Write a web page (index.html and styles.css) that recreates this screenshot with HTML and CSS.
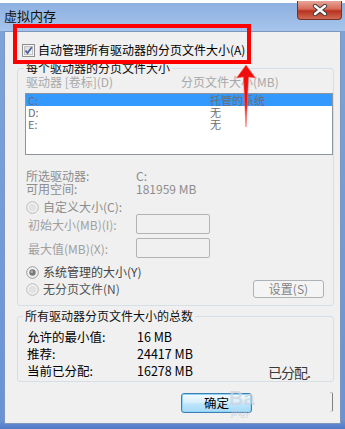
FILE: index.html
```html
<!DOCTYPE html>
<html lang="zh-CN">
<head>
<meta charset="utf-8">
<link rel="stylesheet" href="styles.css">
</head>
<body>
<div class="window">
  <div class="titlebar">
    <span class="title">虚拟内存</span>
    <div class="close">
      <svg width="16" height="12" viewBox="0 0 16 12">
        <path d="M3 2 L13 10 M13 2 L3 10" stroke="#3a3a3a" stroke-width="4.2" stroke-linecap="round"/>
        <path d="M3 2 L13 10 M13 2 L3 10" stroke="#ffffff" stroke-width="2.4" stroke-linecap="round"/>
      </svg>
    </div>
  </div>
  <div class="client">
    <div class="auto-row">
      <svg class="chk" width="13" height="13" viewBox="0 0 13 13">
        <defs><linearGradient id="cg" x1="0" y1="0" x2="1" y2="1"><stop offset="0" stop-color="#d8d8d8"/><stop offset="1" stop-color="#f6f6f6"/></linearGradient></defs>
        <rect x="0.5" y="0.5" width="12" height="12" fill="#f4f4f4" stroke="#8f8f8f"/>
        <rect x="2.5" y="2.5" width="8" height="8" fill="url(#cg)" stroke="#c2c2c2"/>
        <path d="M3.5 6.5 L5.5 9 L9.8 3.2" fill="none" stroke="#4c61a0" stroke-width="1.8"/>
      </svg>
      <span>自动管理所有驱动器的分页文件大小(A)</span>
    </div>

    <div class="group g1">
      <div class="legend">每个驱动器的分页文件大小</div>
      <div class="cols"><span class="c1">驱动器 [卷标](D)</span><span>分页文件大小(MB)</span></div>
      <div class="listbox">
        <div class="lrow sel"><span class="lc1">C:</span><span>托管的系统</span></div>
        <div class="lrow"><span class="lc1">D:</span><span>无</span></div>
        <div class="lrow"><span class="lc1">E:</span><span>无</span></div>
      </div>
      <div class="info">
        <div class="kv"><span class="k">所选驱动器:</span><span>C:</span></div>
        <div class="kv"><span class="k">可用空间:</span><span>181959 MB</span></div>
      </div>
      <div class="radio-row r-custom">
        <svg class="rad" width="13" height="13" viewBox="0 0 13 13">
          <circle cx="6.5" cy="6.5" r="5.8" fill="#f2f2f2" stroke="#b9b9b9"/>
          <circle cx="6.5" cy="6.5" r="3.8" fill="#e2e2e2"/>
        </svg>
        <span>自定义大小(C):</span>
      </div>
      <div class="field"><span class="k2">初始大小(MB)(I):</span><div class="input"></div></div>
      <div class="field f2"><span class="k2">最大值(MB)(X):</span><div class="input"></div></div>
      <div class="radio-row r-sys">
        <svg class="rad" width="13" height="13" viewBox="0 0 13 13">
          <circle cx="6.5" cy="6.5" r="5.8" fill="#f2f2f2" stroke="#9a9a9a"/>
          <circle cx="6.5" cy="6.5" r="3.2" fill="#7a7a7a"/>
          <circle cx="5.8" cy="5.8" r="1.2" fill="#b5b5b5"/>
        </svg>
        <span>系统管理的大小(Y)</span>
      </div>
      <div class="radio-row r-none">
        <svg class="rad" width="13" height="13" viewBox="0 0 13 13">
          <circle cx="6.5" cy="6.5" r="5.8" fill="#f2f2f2" stroke="#b9b9b9"/>
          <circle cx="6.5" cy="6.5" r="3.8" fill="#e2e2e2"/>
        </svg>
        <span>无分页文件(N)</span>
        <div class="btn-set">设置(S)</div>
      </div>
    </div>

    <div class="group g2">
      <div class="legend">所有驱动器分页文件大小的总数</div>
      <div class="tot"><span class="k">允许的最小值:</span><span>16 MB</span></div>
      <div class="tot"><span class="k">推荐:</span><span>24417 MB</span></div>
      <div class="tot"><span class="k">当前已分配:</span><span>16278 MB</span></div>
    </div>

    <div class="btn-row">
      <div class="btn-ok">确定</div>
      <div class="btn-cancel"></div>
    </div>
  </div>

  <div class="red-box"></div>
  <svg class="arrow" width="24" height="68" viewBox="0 0 24 68">
    <path d="M12 3 L21.5 16 L14.6 15 L12 65 L9.4 15 L2.5 16 Z" fill="#f20d0d" stroke="#ff6a6a" stroke-width="0.6"/>
  </svg>
  <span class="wm-ba">Ba</span>
  <span class="wm-jy">jingy</span>
  <span class="wm-fp">已分配.</span>
</div>
</body>
</html>
```

FILE: styles.css
```css
html, body {
  margin: 0;
  padding: 0;
}
body {
  width: 345px;
  height: 429px;
  overflow: hidden;
  font-family: "Noto Sans CJK SC", "Noto Sans", sans-serif;
  font-size: 12px;
  color: #000;
}
.window {
  position: relative;
  width: 345px;
  height: 429px;
  background: linear-gradient(180deg, #ffffff 0, #ffffff 3px, #8db0e0 3px, #a6c5ec 31px, #7ea3da 31px, #6a93d6 420px, #4f7ac4 429px);
  display: flex;
  flex-direction: column;
}
.titlebar {
  height: 31px;
  flex: none;
  display: flex;
  align-items: flex-start;
  padding: 0 3px 0 4px;
  box-sizing: border-box;
}
.title {
  margin-top: 8px;
  line-height: 16px;
  font-size: 13px;
  color: #111;
}
.close {
  margin-left: auto;
  margin-top: 1px;
  width: 45px;
  height: 19px;
  box-sizing: border-box;
  border: 1px solid #7a3025;
  border-top: none;
  border-radius: 0 0 4px 4px;
  background: linear-gradient(180deg, #e6a698 0%, #d56a58 45%, #b8321f 55%, #cf6a52 100%);
  display: flex;
  align-items: center;
  justify-content: center;
}
.client {
  margin: 0 4px;
  height: 393px;
  box-sizing: border-box;
  background: #f0f0f0;
  border: 1px solid #7d96bd;
  display: flex;
  flex-direction: column;
}
.auto-row {
  margin: 10px 0 0 17px;
  height: 16px;
  display: flex;
  align-items: center;
  gap: 3px;
  line-height: 16px;
  font-size: 12px;
}
.chk { flex: none; }
.group {
  margin-left: 12px;
  width: 317px;
  box-sizing: border-box;
  border: 1px solid #d5dfe5;
  border-radius: 3px;
  display: flex;
  flex-direction: column;
}
.g1 {
  margin-top: 10px;
  padding-bottom: 7px;
}
.legend {
  margin: -8px 0 0 6px;
  padding: 0 2px;
  line-height: 14px;
  height: 14px;
  align-self: flex-start;
  background: #f0f0f0;
  color: #111;
}
.cols {
  display: flex;
  padding-left: 8px;
  line-height: 14px;
  color: #a8a8a8;
}
.c1 { width: 155px; }
.listbox {
  margin: 4px 0 0 7px;
  width: 308px;
  height: 62px;
  box-sizing: border-box;
  border: 1px solid #8e949c;
  background: #fff;
  color: #6d6d6d;
}
.lrow {
  height: 12px;
  line-height: 12px;
  display: flex;
  padding-left: 2px;
  font-size: 11px;
}
.lrow.sel { background: #3399ff; }
.lc1 { width: 182px; }
.info {
  margin-top: 14px;
  padding-left: 8px;
  color: #8d8d8d;
}
.kv {
  display: flex;
  line-height: 13px;
}
.k { width: 110px; flex: none; }
.radio-row {
  display: flex;
  align-items: center;
  gap: 4px;
  padding-left: 8px;
  line-height: 14px;
}
.rad { flex: none; }
.r-custom {
  margin-top: 5px;
  color: #8d8d8d;
}
.field {
  display: flex;
  align-items: center;
  padding-left: 10px;
  height: 20px;
  color: #a0a0a0;
}
.field.f2 { margin-top: 4px; }
.k2 { width: 108px; flex: none; }
.input {
  width: 74px;
  height: 20px;
  box-sizing: border-box;
  border: 1px solid #b3b3b3;
  border-radius: 2px;
  background: #f0f0f0;
}
.r-sys {
  margin-top: 7px;
  color: #444;
}
.r-none {
  margin-top: 1px;
  height: 18px;
  color: #555;
}
.btn-set {
  margin-left: auto;
  margin-right: 9px;
  width: 71px;
  height: 18px;
  box-sizing: border-box;
  border: 1px solid #adb2b5;
  border-radius: 3px;
  background: #f4f4f4;
  color: #838383;
  text-align: center;
  line-height: 16px;
}
.g2 {
  margin-top: 10px;
  padding-bottom: 2px;
}
.g2 .legend { margin-left: 5px; }
.tot {
  display: flex;
  padding-left: 9px;
  line-height: 17px;
  font-size: 12.5px;
}
.g2 .legend + .tot { margin-top: 5px; }
.btn-row {
  margin-top: 11px;
  display: flex;
  align-items: flex-start;
}
.btn-ok {
  margin-left: 176px;
  width: 71px;
  height: 20px;
  box-sizing: border-box;
  border: 1px solid #3c7fb1;
  border-radius: 3px;
  background: linear-gradient(180deg, #f2fafe 0%, #d9f0fc 45%, #bee6fd 55%, #a7d9f5 100%);
  box-shadow: inset 0 0 0 1px #8fd3f6;
  text-align: center;
  line-height: 18px;
  font-size: 12.5px;
}
.btn-cancel {
  margin-left: auto;
  margin-right: 7px;
  margin-top: -1px;
  width: 3px;
  height: 20px;
  box-sizing: border-box;
  border-top: 1px solid #c8c8c8;
  border-right: 1px solid #808080;
  border-bottom: 1px solid #d8d8d8;
  border-radius: 0 2px 2px 0;
}
.red-box {
  position: absolute;
  left: 13px;
  top: 24px;
  width: 238px;
  height: 40px;
  box-sizing: border-box;
  border: 4px solid #ff0000;
}
.arrow {
  position: absolute;
  left: 234px;
  top: 62px;
}
.wm-ba {
  position: absolute;
  left: 229px;
  top: 388px;
  line-height: 20px;
  font-family: "Liberation Sans", sans-serif;
  font-weight: bold;
  font-size: 20px;
  color: rgba(205, 210, 220, 0.75);
}
.wm-jy {
  position: absolute;
  left: 231px;
  top: 408px;
  line-height: 10px;
  font-family: "Liberation Sans", sans-serif;
  font-size: 9px;
  color: rgba(200, 205, 215, 0.8);
}
.wm-fp {
  position: absolute;
  left: 268px;
  top: 362px;
  font-size: 14px;
  color: #3a3a3a;
  letter-spacing: -1px;
}
```
